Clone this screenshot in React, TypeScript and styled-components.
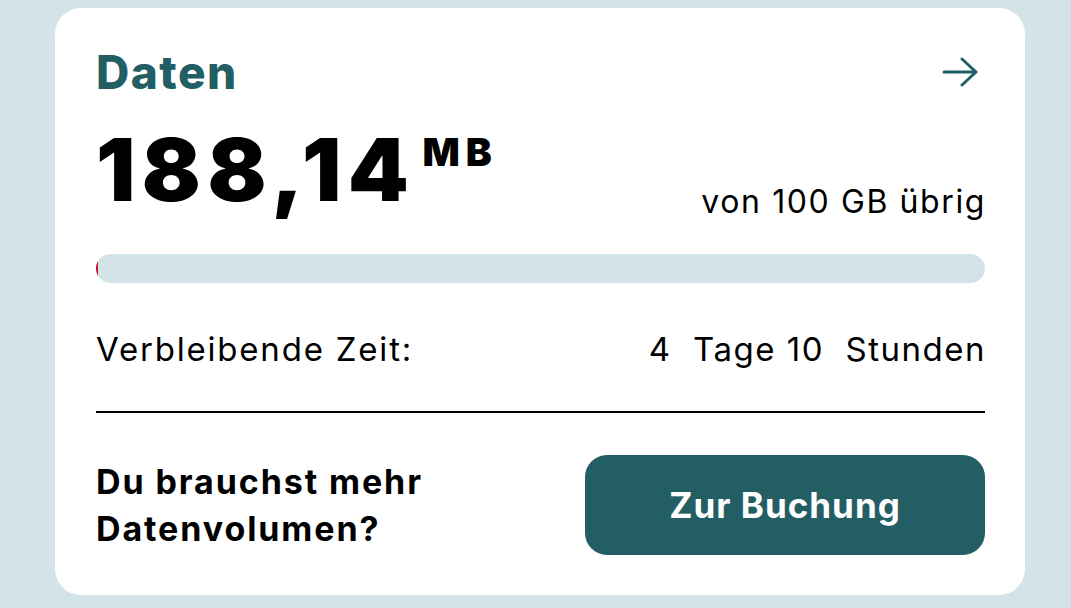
import React from "react";
import styled, { createGlobalStyle } from "styled-components";

const Global = createGlobalStyle`
  html, body { margin: 0; padding: 0; }
  body {
    background: #d2e4e8;
    font-family: "Inter", "Noto Sans", sans-serif;
    color: #000;
  }
`;

const Page = styled.div`
  padding: 8px 46px 13px 55px;
  min-height: 608px;
  box-sizing: border-box;
`;

const Card = styled.section`
  background: #fff;
  border-radius: 26px;
  height: 587px;
  box-sizing: border-box;
  padding: 44px 40px 0 41px;
  display: flex;
  flex-direction: column;
`;

const Header = styled.div`
  display: flex;
  justify-content: space-between;
  align-items: center;
  height: 40px;
`;

const Title = styled.h2`
  margin: 0;
  font-size: 46px;
  line-height: 40px;
  font-weight: 800;
  color: #235e65;
  letter-spacing: 1.5px;
`;

const ArrowBtn = styled.button`
  border: 0;
  background: none;
  padding: 0;
  margin-right: 7px;
  display: flex;
  color: #235e65;
  cursor: pointer;
`;

const AmountRow = styled.div`
  display: flex;
  justify-content: space-between;
  align-items: flex-end;
  margin-top: 28px;
`;

const Amount = styled.div`
  display: flex;
  align-items: flex-start;
`;

const Value = styled.span`
  font-size: 87px;
  line-height: 100px;
  font-weight: 900;
  letter-spacing: 6.5px;
`;

const Unit = styled.span`
  font-size: 39px;
  font-weight: 900;
  line-height: 1;
  margin-left: 7px;
  margin-top: 12px;
  letter-spacing: 6px;
`;

const Remaining = styled.span`
  font-size: 32px;
  line-height: 40px;
  letter-spacing: 1.6px;
  margin-bottom: -2px;
  margin-right: -1px;
`;

const Track = styled.div`
  margin-top: 34px;
  height: 29px;
  border-radius: 15px;
  background: #d2e4e8;
  overflow: hidden;
`;

const Fill = styled.div`
  height: 100%;
  background: #c8102e;
  border-radius: 15px 0 0 15px;
`;

const InfoRow = styled.div`
  display: flex;
  justify-content: space-between;
  align-items: center;
  margin-top: 46px;
  font-size: 33px;
  line-height: 40px;
  letter-spacing: 1.5px;
`;

const InfoLabel = styled.span`
  letter-spacing: 1.8px;
`;

const InfoValue = styled.span`
  margin-right: -1px;
`;

const Divider = styled.hr`
  margin: 42px 0 0;
  border: 0;
  height: 2px;
  background: #000;
`;

const Footer = styled.div`
  display: flex;
  justify-content: space-between;
  align-items: center;
  margin-top: 42px;
`;

const Question = styled.p`
  margin: 0;
  font-size: 34px;
  line-height: 47px;
  font-weight: 700;
  letter-spacing: 1.9px;
`;

const BookButton = styled.button`
  width: 400px;
  height: 100px;
  border: 0;
  border-radius: 22px;
  background: #235e65;
  color: #fff;
  font-family: inherit;
  font-size: 35px;
  font-weight: 700;
  letter-spacing: 1px;
  cursor: pointer;
`;

export default function App() {
  const used = 0.18;
  return (
    <>
      <Global />
      <Page>
        <Card>
          <Header>
            <Title>Daten</Title>
            <ArrowBtn aria-label="Details">
              <svg width="36" height="30" viewBox="0 0 36 30" fill="none" stroke="currentColor" strokeWidth="3" strokeLinecap="round" strokeLinejoin="round">
                <path d="M2 15h32M20 2l14 13-14 13" />
              </svg>
            </ArrowBtn>
          </Header>
          <AmountRow>
            <Amount>
              <Value>188,14</Value>
              <Unit>MB</Unit>
            </Amount>
            <Remaining>von 100 GB übrig</Remaining>
          </AmountRow>
          <Track>
            <Fill style={{ width: `${used}%` }} />
          </Track>
          <InfoRow>
            <InfoLabel>Verbleibende Zeit:</InfoLabel>
            <InfoValue>4&nbsp; Tage 10&nbsp; Stunden</InfoValue>
          </InfoRow>
          <Divider />
          <Footer>
            <Question>
              Du brauchst mehr
              <br />
              Datenvolumen?
            </Question>
            <BookButton>Zur Buchung</BookButton>
          </Footer>
        </Card>
      </Page>
    </>
  );
}
